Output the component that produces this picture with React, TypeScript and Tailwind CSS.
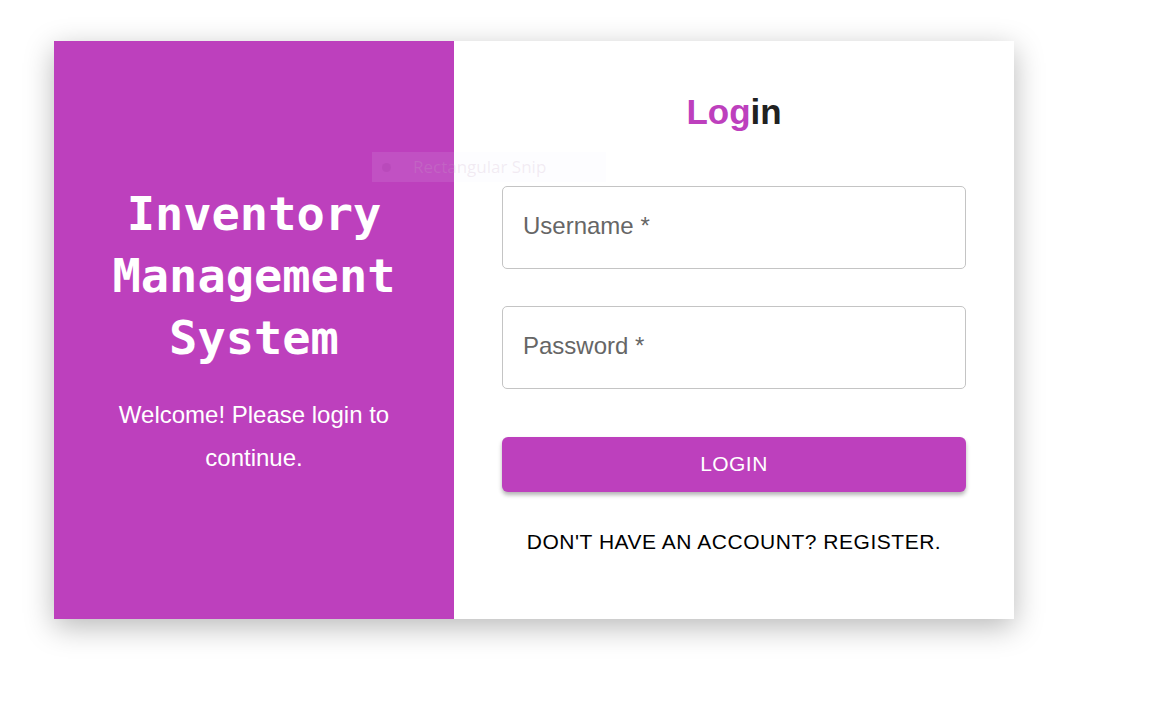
import React from "react";

const PURPLE = "bg-[#bd40bd]";

function Field({ label }: { label: string }) {
  return (
    <div className="h-[83px] w-full rounded-[5px] border border-[#c4c4c4] flex items-center px-[20px] pb-[3px]">
      <span className="text-[24px] text-[#666666] font-['Liberation_Sans',Arial,sans-serif]">{label}</span>
    </div>
  );
}

export default function App() {
  return (
    <div className="relative min-h-[720px] w-[1152px] bg-white font-['Liberation_Sans',Arial,sans-serif]">
      <div className="absolute left-[54px] top-[41px] flex w-[960px] h-[578px] shadow-[0_8px_28px_rgba(0,0,0,0.28)]">
        {/* left brand panel */}
        <div className={`${PURPLE} w-[400px] flex flex-col items-center justify-center text-center text-white px-[20px]`}>
          <h1 className="font-['DejaVu_Sans_Mono',monospace] font-bold text-[47px] leading-[62px] mt-[1px]">
            Inventory
            <br />
            Management
            <br />
            System
          </h1>
          <p className="mt-[24px] text-[24px] leading-[43px] px-[30px]">Welcome! Please login to continue.</p>
        </div>

        {/* right form panel */}
        <div className="flex-1 bg-white flex flex-col px-[48px] pt-[49px]">
          <h2 className="text-center text-[35px] font-bold leading-[44px]">
            <span className="text-[#bd40bd]">Log</span>
            <span className="text-[#212121]">in</span>
          </h2>
          <div className="mt-[52px]">
            <Field label="Username *" />
          </div>
          <div className="mt-[37px]">
            <Field label="Password *" />
          </div>
          <button
            className={`${PURPLE} mt-[48px] h-[55px] w-full rounded-[6px] text-white text-[21px] tracking-[0.02em] pb-[2px] shadow-[0_3px_4px_rgba(0,0,0,0.3)]`}
          >
            LOGIN
          </button>
          <p className="mt-[34px] text-center text-[21px] tracking-[0.025em] text-black">DON'T HAVE AN ACCOUNT? REGISTER.</p>
        </div>
      </div>

      {/* faint snipping tool overlay */}
      <div className="absolute left-[372px] top-[152px] w-[234px] h-[30px] bg-[rgba(235,240,255,0.1)] flex items-center pl-[10px] gap-[22px]">
        <span className="w-[9px] h-[9px] rounded-full bg-[rgba(170,60,170,0.3)]" />
        <span className="text-[17px] text-[rgba(200,170,200,0.22)] font-['Open_Sans',sans-serif]">Rectangular Snip</span>
      </div>
    </div>
  );
}
